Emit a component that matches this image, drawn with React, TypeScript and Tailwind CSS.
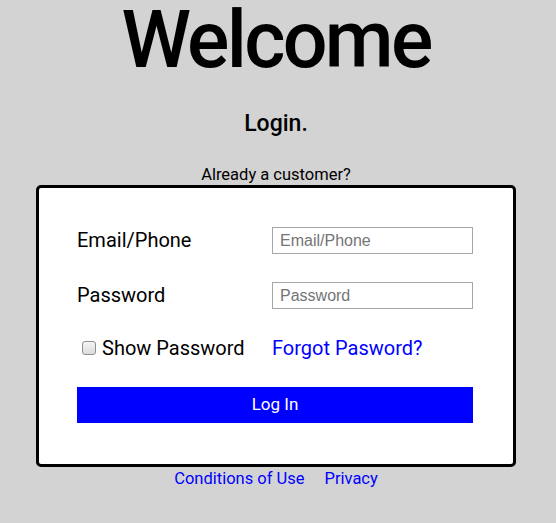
import React from "react";

export default function App() {
  return (
    <div className="min-h-[523px] w-full bg-[#d3d3d3] font-['Roboto',sans-serif] text-black">
      <div className="flex flex-col items-center pr-[4px]">
        <h1 className="h-[80px] text-[79px] leading-[80px] font-medium tracking-[-2.7px]">Welcome</h1>
        <h2 className="mt-[32px] text-[23px] leading-[24px] font-medium">Login.</h2>
        <p className="mt-[30px] text-[16.5px] leading-[17px]">Already a customer?</p>
        <div className="mt-[2px] w-[480px] rounded-[5px] border-[3px] border-black bg-white px-[38px] pt-[39px] pb-[41px]">
          <div className="w-[396px]">
            <div className="flex h-[27px] items-center">
              <label className="w-[195px] text-[20px] leading-[24px] -mt-[1px]">Email/Phone</label>
              <input
                type="text"
                placeholder="Email/Phone"
                className="h-[27px] w-[201px] border border-[#a6a6a6] px-[7px] font-['Liberation_Sans',Arial,sans-serif] text-[16px] placeholder:text-[#757575] outline-none"
              />
            </div>
            <div className="mt-[28px] flex h-[27px] items-center">
              <label className="w-[195px] text-[20px] leading-[24px] -mt-[1px]">Password</label>
              <input
                type="password"
                placeholder="Password"
                className="h-[27px] w-[201px] border border-[#a6a6a6] px-[7px] font-['Liberation_Sans',Arial,sans-serif] text-[16px] placeholder:text-[#757575] outline-none"
              />
            </div>
            <div className="mt-[27px] flex h-[24px] items-center">
              <label className="flex w-[195px] items-center text-[20px] leading-[24px]">
                <span className="ml-[5px] mr-[6px] box-border inline-block h-[14px] w-[14px] rounded-[3px] border border-[#8f8f8f] bg-gradient-to-b from-[#f4f4f4] to-[#dcdcdc]" />
                Show Password
              </label>
              <a href="#" className="text-[20px] leading-[24px] text-[#0000ff]">Forgot Pasword?</a>
            </div>
            <button className="mt-[27px] h-[36px] w-[396px] bg-[#0000ff] text-[17px] text-white">Log In</button>
          </div>
        </div>
        <div className="mt-[2px] flex gap-[20px] text-[16.5px] leading-[20px] text-[#0000ff]">
          <a href="#">Conditions of Use</a>
          <a href="#">Privacy</a>
        </div>
      </div>
    </div>
  );
}
